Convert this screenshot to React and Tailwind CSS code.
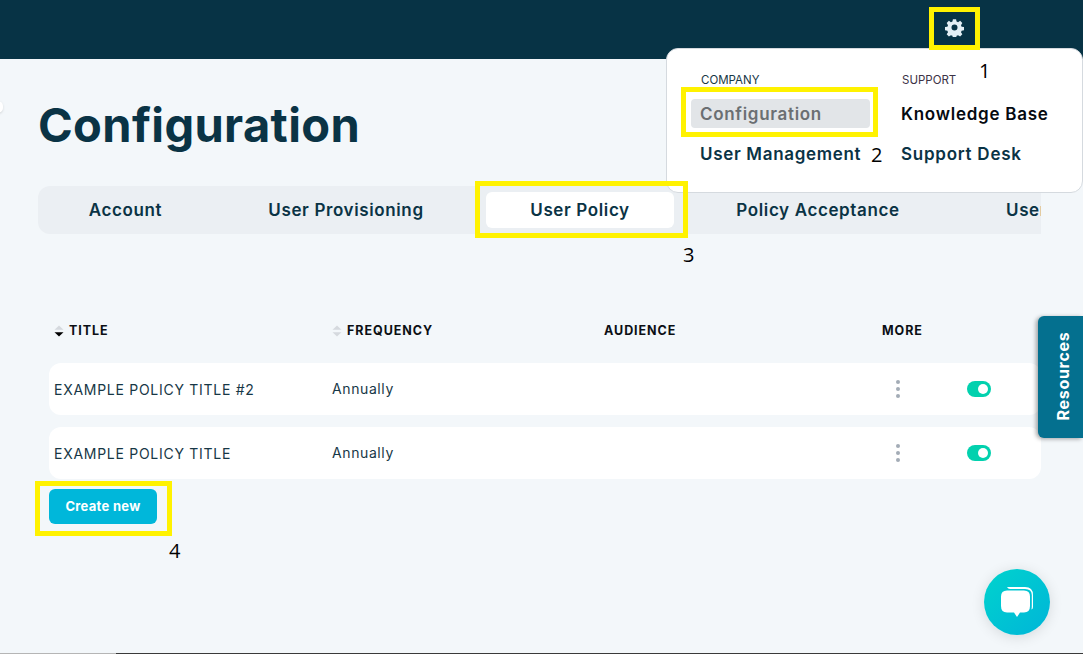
const FONT = "font-['Inter','Liberation_Sans',sans-serif]";

function Gear({ className }) {
  return (
    <svg viewBox="0 0 24 24" className={className} fill="currentColor">
      <path
        fillRule="evenodd"
        d="M10 1.5h4l.6 3 1.9.8 2.6-1.7 2.8 2.8-1.7 2.6.8 1.9 3 .6v4l-3 .6-.8 1.9 1.7 2.6-2.8 2.8-2.6-1.7-1.9.8-.6 3h-4l-.6-3-1.9-.8-2.6 1.7-2.8-2.8 1.7-2.6-.8-1.9-3-.6v-4l3-.6.8-1.9-1.7-2.6 2.8-2.8 2.6 1.7 1.9-.8z M12 8.2a3.8 3.8 0 1 0 0 7.6 3.8 3.8 0 0 0 0-7.6z"
      />
    </svg>
  );
}

function SortIcon({ active }) {
  return (
    <svg viewBox="0 0 10 12" className="w-[10px] h-[12px]">
      <path d="M5 0.5 L9.5 4.8 H0.5 Z" fill="#d5d9de" />
      <path d="M5 11.5 L9.5 7.2 H0.5 Z" fill={active ? "#000000" : "#d5d9de"} />
    </svg>
  );
}

function Toggle() {
  return (
    <div className="w-6 h-4 rounded-full bg-[#02d1ae] flex items-center justify-end pr-[3px]">
      <div className="w-[10px] h-[10px] rounded-full bg-white" />
    </div>
  );
}

function Dots() {
  return (
    <div className="flex flex-col gap-[3px] items-center">
      <div className="w-1 h-1 rounded-full bg-[#a3acb6]" />
      <div className="w-1 h-1 rounded-full bg-[#a3acb6]" />
      <div className="w-1 h-1 rounded-full bg-[#a3acb6]" />
    </div>
  );
}

function Row({ title }) {
  return (
    <div className="h-[52px] bg-white rounded-xl grid grid-cols-[278px_272px_276px_36px_75px_1fr] items-center pl-[5px]">
      <div className="text-[14px] tracking-[0.72px] text-[#173746]">{title}</div>
      <div className="text-[14px] tracking-[0.6px] pb-[1px] text-[#173746]">Annually</div>
      <div />
      <div className="flex justify-center"><Dots /></div>
      <div className="flex justify-end"><Toggle /></div>
      <div />
    </div>
  );
}

function Head({ label, sort, active }) {
  return (
    <div className="flex items-center gap-[5px] text-[12.5px] font-bold tracking-[0.95px] text-[#0b0f14]">
      {sort && <SortIcon active={active} />}
      <span>{label}</span>
    </div>
  );
}

const tabs = [
  { label: "Account", w: "w-[161px]" },
  { label: "User Provisioning", w: "w-[244px]" },
  { label: "User Policy", w: "w-[188px]", active: true },
  { label: "Policy Acceptance", w: "w-[252px]" },
  { label: "User Groups", w: "w-[200px]", start: true },
];

function Mark({ className }) {
  return <div className={`absolute border-[5px] border-[#fff200] pointer-events-none ${className}`} />;
}

function Num({ className, children }) {
  return (
    <div className={`absolute font-['Open_Sans',sans-serif] text-[20px] leading-none text-black ${className}`}>
      {children}
    </div>
  );
}

export default function App() {
  return (
    <div className={`${FONT} relative w-[1083px] h-[654px] overflow-hidden bg-[#f3f7fa] text-[#0a3345]`}>
      <header className="h-[59px] bg-[#073345]" />

      <main className="pl-[38px] pr-[42px]">
        <h1 className="mt-[36px] mb-[31px] h-[60px] text-[47px] leading-[60px] font-bold tracking-[0.35px] text-[#0a3345]">
          Configuration
        </h1>

        <nav className="h-12 rounded-l-xl bg-[#ebeff3] overflow-hidden flex items-center pl-[7px] gap-[18px]">
          {tabs.map((t) => (
            <div
              key={t.label}
              className={`${t.w} shrink-0 h-[36px] rounded-md flex items-center ${t.start ? "justify-start pl-[44px]" : "justify-center"} pt-[2px] text-[17px] font-semibold tracking-[0.62px] whitespace-nowrap text-[#0a3345] ${t.active ? "bg-white" : ""}`}
            >
              {t.label}
            </div>
          ))}
        </nav>

        <section className="mt-[88px] pl-[11px]">
          <div className="h-[18px] grid grid-cols-[278px_272px_278px_1fr] items-center pl-[5px]">
            <Head label="TITLE" sort active />
            <Head label="FREQUENCY" sort />
            <Head label="AUDIENCE" />
            <Head label="MORE" />
          </div>
          <div className="mt-[23px] flex flex-col gap-3">
            <Row title="EXAMPLE POLICY TITLE #2" />
            <Row title="EXAMPLE POLICY TITLE" />
          </div>
          <button className="mt-[10px] w-[108px] h-[35px] rounded-md bg-[#00b7da] text-white text-[13px] font-bold tracking-[0.3px]">
            Create new
          </button>
        </section>
      </main>

      {/* dropdown */}
      <div className="absolute left-[666px] top-[48px] w-[417px] h-[145px] bg-white rounded-xl border border-[#d5dadf] grid grid-cols-[200px_1fr] pl-[24px] pr-2 pt-[24px]">
        <div className="flex flex-col">
          <div className="pl-[10px] text-[11.5px] leading-[14px] text-[#173746]">COMPANY</div>
          <div className="mt-[12px] h-[29px] w-[179px] rounded bg-[#e2e5e8] pl-[9px] pt-[2px] flex items-center text-[17px] font-semibold tracking-[0.68px] text-[#6b6f72]">
            Configuration
          </div>
          <div className="mt-[12px] pl-[9px] text-[17px] leading-[29px] font-semibold tracking-[0.68px] whitespace-nowrap text-[#0a3345]">
            User Management
          </div>
        </div>
        <div className="flex flex-col">
          <div className="pl-[11px] text-[11.5px] leading-[14px] text-[#3c3346]">SUPPORT</div>
          <div className="mt-[12px] h-[29px] pl-[10px] pt-[2px] flex items-center text-[17px] font-semibold tracking-[0.75px] text-[#050a10]">
            Knowledge Base
          </div>
          <div className="mt-[12px] pl-[10px] text-[17px] leading-[29px] font-semibold tracking-[0.75px] text-[#0a3345]">
            Support Desk
          </div>
        </div>
      </div>

      {/* gear */}
      <div className="absolute left-[945px] top-[18px] text-[#e3eff5]">
        <Gear className="w-[19px] h-[19px]" />
      </div>

      {/* Resources side tab */}
      <div className="absolute left-[1038px] top-[316px] w-[45px] h-[122px] bg-[#04708f] rounded-l-md shadow-[-2px_1px_4px_rgba(0,0,0,0.35)] flex items-center justify-center pl-[5px] pb-[3px]">
        <span className="-rotate-90 text-white text-[16px] font-bold tracking-[0.7px] whitespace-nowrap">Resources</span>
      </div>

      {/* chat bubble */}
      <div className="absolute left-[984px] top-[569px] w-[66px] h-[66px] rounded-full bg-gradient-to-br from-[#00d3cd] to-[#00b5d8] shadow-[0_2px_14px_rgba(0,0,0,0.12)] flex items-center justify-center">
        <svg viewBox="0 0 38 36" className="w-[38px] h-[36px] mt-[1px]">
          <path d="M9 2 H27 Q35 2 35 10 V22 Q35 24 33.4 24.6 Q33.8 23 33.8 21 V10 Q33.8 4 27 4 H12 Q10 4 9 2 Z" fill="#ffffff" />
          <path
            d="M9 5.5 H26 Q32 5.5 32 11.5 V21 Q32 27.5 26 27.5 H22 L19 32 L16 27.5 H9 Q3 27.5 3 21 V11.5 Q3 5.5 9 5.5 Z"
            fill="#ffffff"
          />
        </svg>
      </div>

      {/* left edge notch */}
      <div className="absolute -left-[7px] top-[101px] w-[10px] h-[12px] rounded-full bg-white shadow" />

      {/* bottom edge strip */}
      <div className="absolute bottom-0 left-0 right-0 h-px flex">
        <div className="w-[116px] bg-[#b5b5b5]" />
        <div className="flex-1 bg-[#3a3a3a]" />
      </div>

      {/* annotations */}
      <Mark className="left-[929px] top-[7px] w-[51px] h-[43px]" />
      <Mark className="left-[681px] top-[87px] w-[197px] h-[50px]" />
      <Mark className="left-[475px] top-[181px] w-[213px] h-[57px]" />
      <Mark className="left-[35px] top-[481px] w-[137px] h-[55px]" />
      <Num className="left-[979px] top-[61px]">1</Num>
      <Num className="left-[871px] top-[145px]">2</Num>
      <Num className="left-[683px] top-[245px]">3</Num>
      <Num className="left-[169px] top-[541px]">4</Num>
    </div>
  );
}
